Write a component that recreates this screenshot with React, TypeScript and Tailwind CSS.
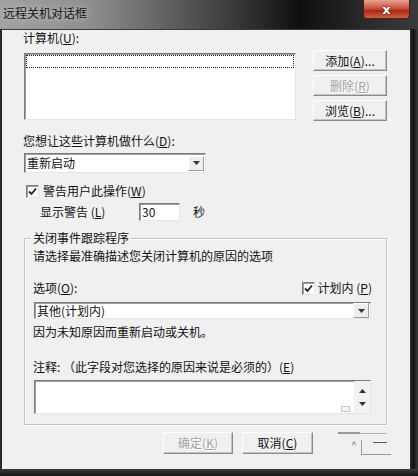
import React from 'react';

const font = { fontFamily: '"Noto Sans CJK SC", "Liberation Sans", sans-serif' };

// mnemonic letter, underlined like the classic dialogs
const Key = ({ k }: { k: string }) => (
  <span>
    (<span className="underline underline-offset-1">{k}</span>)
  </span>
);

const Btn = ({ children, disabled, w = 'w-[74px]', h = 'h-[21px]' }: { children: React.ReactNode; disabled?: boolean; w?: string; h?: string }) => (
  <div
    className={`${w} ${h} flex items-center justify-center border border-t-[#ffffff] border-l-[#ffffff] border-b-[#8a8a8a] border-r-[#8a8a8a] bg-[#f0f0f0] shadow-[inset_-1px_-1px_0_#c4c4c4] text-[12px] ${
      disabled ? 'text-[#a3a3a3] [text-shadow:1px_1px_0_#fff]' : 'text-[#111]'
    }`}
  >
    {children}
  </div>
);

const Sunken = ({ className, children }: { className: string; children?: React.ReactNode }) => (
  <div className={`border border-t-[#7a7a7a] border-l-[#7a7a7a] border-b-[#e6e6e6] border-r-[#e6e6e6] bg-white shadow-[inset_1px_1px_0_#a0a0a0] ${className}`}>
    {children}
  </div>
);

const Arrow = ({ up }: { up?: boolean }) => (
  <svg width="7" height="4" viewBox="0 0 7 4">
    <path d={up ? 'M0 4 L3.5 0 L7 4 Z' : 'M0 0 L7 0 L3.5 4 Z'} fill="#333" />
  </svg>
);

const Select = ({ text, className }: { text: string; className: string }) => (
  <Sunken className={`flex items-center ${className}`}>
    <span className="flex-1 pl-[2px] text-[12px] text-[#111]">{text}</span>
    <div className="w-[16px] h-[15px] mr-[1px] flex items-center justify-center bg-[#eeeeee] border border-t-[#fff] border-l-[#fff] border-b-[#9a9a9a] border-r-[#9a9a9a]">
      <Arrow />
    </div>
  </Sunken>
);

const Check = () => (
  <Sunken className="w-[13px] h-[13px] flex items-center justify-center">
    <svg width="9" height="9" viewBox="0 0 9 9">
      <path d="M1 4.5 L3.5 7 L8 1.5" stroke="#222" strokeWidth="1.8" fill="none" />
    </svg>
  </Sunken>
);

export default function App() {
  return (
    <div className="w-[418px] h-[476px] flex flex-col bg-[#141414] overflow-hidden" style={font}>
      {/* title bar */}
      <div className="h-[29px] flex items-start justify-between bg-[linear-gradient(90deg,#a2a2a2_0%,#8d8d8d_22%,#3c3c3c_55%,#0f0f0f_72%,#2e2e2e_90%,#3a3a3a_100%)]">
        <span className="ml-[3px] mt-[5px] text-[12px] leading-[16px] text-[#151515] [text-shadow:0_0_6px_#d8d8d8]">远程关机对话框</span>
        <div className="mr-[8px] w-[47px] h-[19px] rounded-b-[4px] border border-[#5a1a14] border-t-0 bg-[linear-gradient(180deg,#e9a293_0%,#c8553f_45%,#a92a14_60%,#d0604a_100%)] flex items-center justify-center">
          <span className="text-white font-bold text-[13px] leading-none [text-shadow:0_0_2px_#400] [font-family:'DejaVu_Sans',sans-serif]">x</span>
        </div>
      </div>

      <div className="flex">
        <div className="w-[2px] bg-[#2a2a2a]" />
        {/* client area */}
        <div className="w-[408px] h-[440px] bg-[#f0f0f0] border-t border-[#3a3a3a] flex flex-col text-[12px] text-[#111] leading-[14px]">
          <div className="ml-[21px] mt-[1px] h-[14px]">
            计算机<Key k="U" />:
          </div>

          <div className="mt-[5px] ml-[22px] flex">
            <Sunken className="mt-[3px] w-[272px] h-[67px] p-[1px]">
              <div className="h-[13px] border border-dotted border-[#222]" />
            </Sunken>
            <div className="ml-[17px] flex flex-col gap-[4px]">
              <Btn>
                添加<Key k="A" />...
              </Btn>
              <Btn disabled>
                删除<Key k="R" />
              </Btn>
              <Btn>
                浏览<Key k="B" />...
              </Btn>
            </div>
          </div>

          <div className="ml-[21px] mt-[13px] h-[14px]">
            您想让这些计算机做什么<Key k="D" />:
          </div>
          <Select text="重新启动" className="ml-[22px] mt-[5px] w-[182px] h-[20px]" />

          <div className="ml-[24px] mt-[11px] h-[14px] flex items-center">
            <Check />
            <span className="ml-[4px]">
              警告用户此操作<Key k="W" />
            </span>
          </div>

          <div className="ml-[38px] mt-[5px] h-[18px] flex items-center">
            <span className="w-[99px]">
              显示警告 <Key k="L" />
            </span>
            <Sunken className="w-[41px] h-[18px] flex items-center pl-[2px]">30</Sunken>
            <span className="ml-[13px]">秒</span>
          </div>

          {/* group box */}
          <div className="relative ml-[22px] mt-[17px] w-[363px] h-[187px] border border-[#c2c2c2] shadow-[inset_1px_1px_0_#fff,1px_1px_0_#fff] flex flex-col">
            <span className="absolute left-[6px] -top-[8px] px-[2px] bg-[#f0f0f0]">关闭事件跟踪程序</span>
            <div className="ml-[8px] mt-[10px] h-[14px]">请选择最准确描述您关闭计算机的原因的选项</div>
            <div className="ml-[8px] mr-[14px] mt-[18px] h-[14px] flex items-center justify-between">
              <span>
                选项<Key k="O" />:
              </span>
              <div className="flex items-center">
                <Check />
                <span className="ml-[3px]">
                  计划内 <Key k="P" />
                </span>
              </div>
            </div>
            <Select text="其他(计划内)" className="ml-[9px] mt-[7px] w-[337px] h-[17px]" />
            <div className="ml-[8px] mt-[6px] h-[14px]">因为未知原因而重新启动或关机。</div>
            <div className="ml-[8px] mt-[21px] h-[14px]">
              注释: （此字段对您选择的原因来说是必须的）<Key k="E" />
            </div>
            <Sunken className="ml-[9px] mt-[6px] w-[337px] h-[34px] flex justify-end items-end">
              <div className="w-[9px] h-[6px] mb-[1px] mr-[4px] border border-[#c8c8c8] bg-[#f4f4f4]" />
              <div className="w-[16px] h-full bg-[#f2f2f2] flex flex-col items-center justify-around py-[3px]">
                <Arrow up />
                <Arrow />
              </div>
            </Sunken>
          </div>

          <div className="mt-[7px] ml-[161px] flex items-start">
            <Btn disabled w="w-[70px]" h="h-[22px]">
              确定 <Key k="K" />
            </Btn>
            <div className="ml-[9px]">
              <Btn w="w-[71px]" h="h-[22px]">
                取消<Key k="C" />
              </Btn>
            </div>
            {/* leftover redraw fragments */}
            <div className="ml-[25px] flex flex-col">
              <div className="flex">
                <div className="w-[22px] border-t-2 border-[#9a9a9a]" />
                <div className="w-[27px] border-t border-[#b0b0b0] mt-[1px]" />
              </div>
              <div className="mt-[6px] flex">
                <span className="text-[10px] leading-none text-[#777] ml-[13px]">^</span>
                <div className="ml-[4px] w-[30px] h-[15px] border-l border-b border-[#9a9a9a] flex justify-end">
                  <div className="w-[14px] border-t border-[#555] mt-[2px] mr-[4px]" />
                </div>
              </div>
            </div>
          </div>
        </div>
        <div className="w-[8px] bg-[linear-gradient(90deg,#2e2e2e,#101010_40%,#3a3a3a)]" />
      </div>
      <div className="flex-1 bg-[linear-gradient(180deg,#3a3a3a,#151515)]" />
    </div>
  );
}
